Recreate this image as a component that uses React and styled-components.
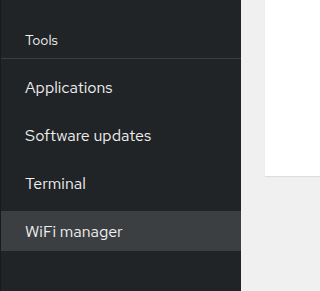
import React from "react";
import styled, { createGlobalStyle } from "styled-components";

const Global = createGlobalStyle`
  html, body { margin: 0; padding: 0; background: #f0f0f0; }
  body { font-family: "Red Hat Text", "Open Sans", "Noto Sans", sans-serif; }
`;

const Page = styled.div`
  display: flex;
  height: 291px;
  overflow: hidden;
`;

const Sidebar = styled.nav`
  width: 240px;
  flex: none;
  background: #212427;
  border-left: 1px solid #141c21;
  display: flex;
  flex-direction: column;
`;

const SectionTitle = styled.div`
  padding: 30px 24px 0 24px;
  height: 28px;
  font-size: 14px;
  line-height: 20px;
  color: #f0f0f0;
  border-bottom: 1px solid #3c3f42;
`;

const List = styled.ul`
  list-style: none;
  margin: 0;
  padding: 4px 0 0 0;
  display: flex;
  flex-direction: column;
`;

const Item = styled.li`
  margin: 4px 0;
  height: 40px;
  display: flex;
  align-items: center;
  padding: 0 24px;
  font-size: 16px;
  color: #f0f0f0;
  background: ${(p) => (p.$active ? "#3c3f42" : "transparent")};
`;

const Main = styled.main`
  flex: 1;
  padding-left: 24px;
`;

const Card = styled.div`
  background: #fff;
  height: 176px;
  box-shadow: 0 1px 1px rgba(3, 3, 3, 0.08);
`;

const items = ["Applications", "Software updates", "Terminal", "WiFi manager"];

export default function App() {
  return (
    <>
      <Global />
      <Page>
        <Sidebar>
          <SectionTitle>Tools</SectionTitle>
          <List>
            {items.map((t) => (
              <Item key={t} $active={t === "WiFi manager"}>
                {t}
              </Item>
            ))}
          </List>
        </Sidebar>
        <Main>
          <Card />
        </Main>
      </Page>
    </>
  );
}
